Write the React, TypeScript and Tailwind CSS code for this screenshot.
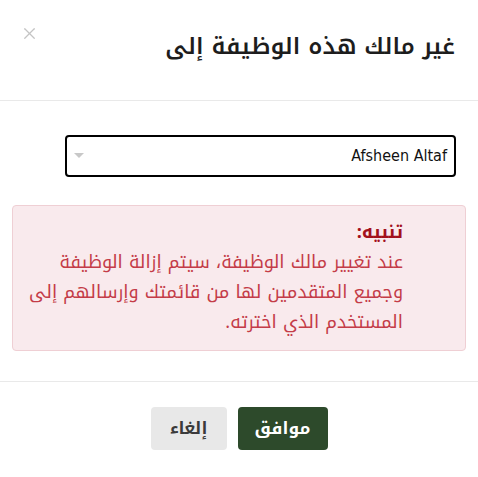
import { X } from "lucide-react";

export default function App() {
  return (
    <div dir="rtl" className="w-[478px] h-[477px] bg-white text-[#1d1d1d] font-['Noto_Kufi_Arabic',sans-serif]">
      {/* header */}
      <div className="flex items-start justify-between h-[101px] border-b border-[#e9e9e9] pr-[23px] pl-[20px]">
        <h2 className="mt-[25px] text-[23px] leading-[44px] font-semibold">غير مالك هذه الوظيفة إلى</h2>
        <button className="mt-[24px] text-[#c4c4c4]">
          <X size={19} strokeWidth={1.6} />
        </button>
      </div>

      {/* body */}
      <div className="h-[281px] border-b border-[#e9e9e9] px-[12px] pt-[34px]">
        <div className="ml-[53px] mr-[10px] flex items-center justify-between h-[42px] border-2 border-black rounded-[4px] pr-[7px] pl-[6px]">
          <span className="text-[16px] text-[#111] font-['DejaVu_Sans_Condensed',sans-serif]">Afsheen Altaf</span>
          <svg width="12" height="8" viewBox="0 0 12 8">
            <path d="M1 1h10L6 6z" fill="#c8c8c8" />
          </svg>
        </div>

        <div className="mt-[28px] h-[146px] rounded-[4px] border border-[#efcfd4] bg-[#f9eaed] pr-[62px] pl-[14px] pt-[11px]">
          <div className="text-[18px] leading-[30px] font-bold text-[#a3111d]">تنبيه:</div>
          <p className="text-[18px] leading-[30px] text-[#c43c48]">
            عند تغيير مالك الوظيفة، سيتم إزالة الوظيفة وجميع المتقدمين لها من قائمتك وإرسالهم إلى المستخدم الذي اخترته.
          </p>
        </div>
      </div>

      {/* footer */}
      <div className="flex justify-center gap-[11px] pt-[25px]">
        <button className="w-[90px] h-[43px] rounded-[4px] bg-[#2d4a2b] text-white text-[17px] font-bold">موافق</button>
        <button className="w-[76px] h-[43px] rounded-[4px] bg-[#e8e8e8] text-[#3a3a3a] text-[17px] font-bold">إلغاء</button>
      </div>
    </div>
  );
}
